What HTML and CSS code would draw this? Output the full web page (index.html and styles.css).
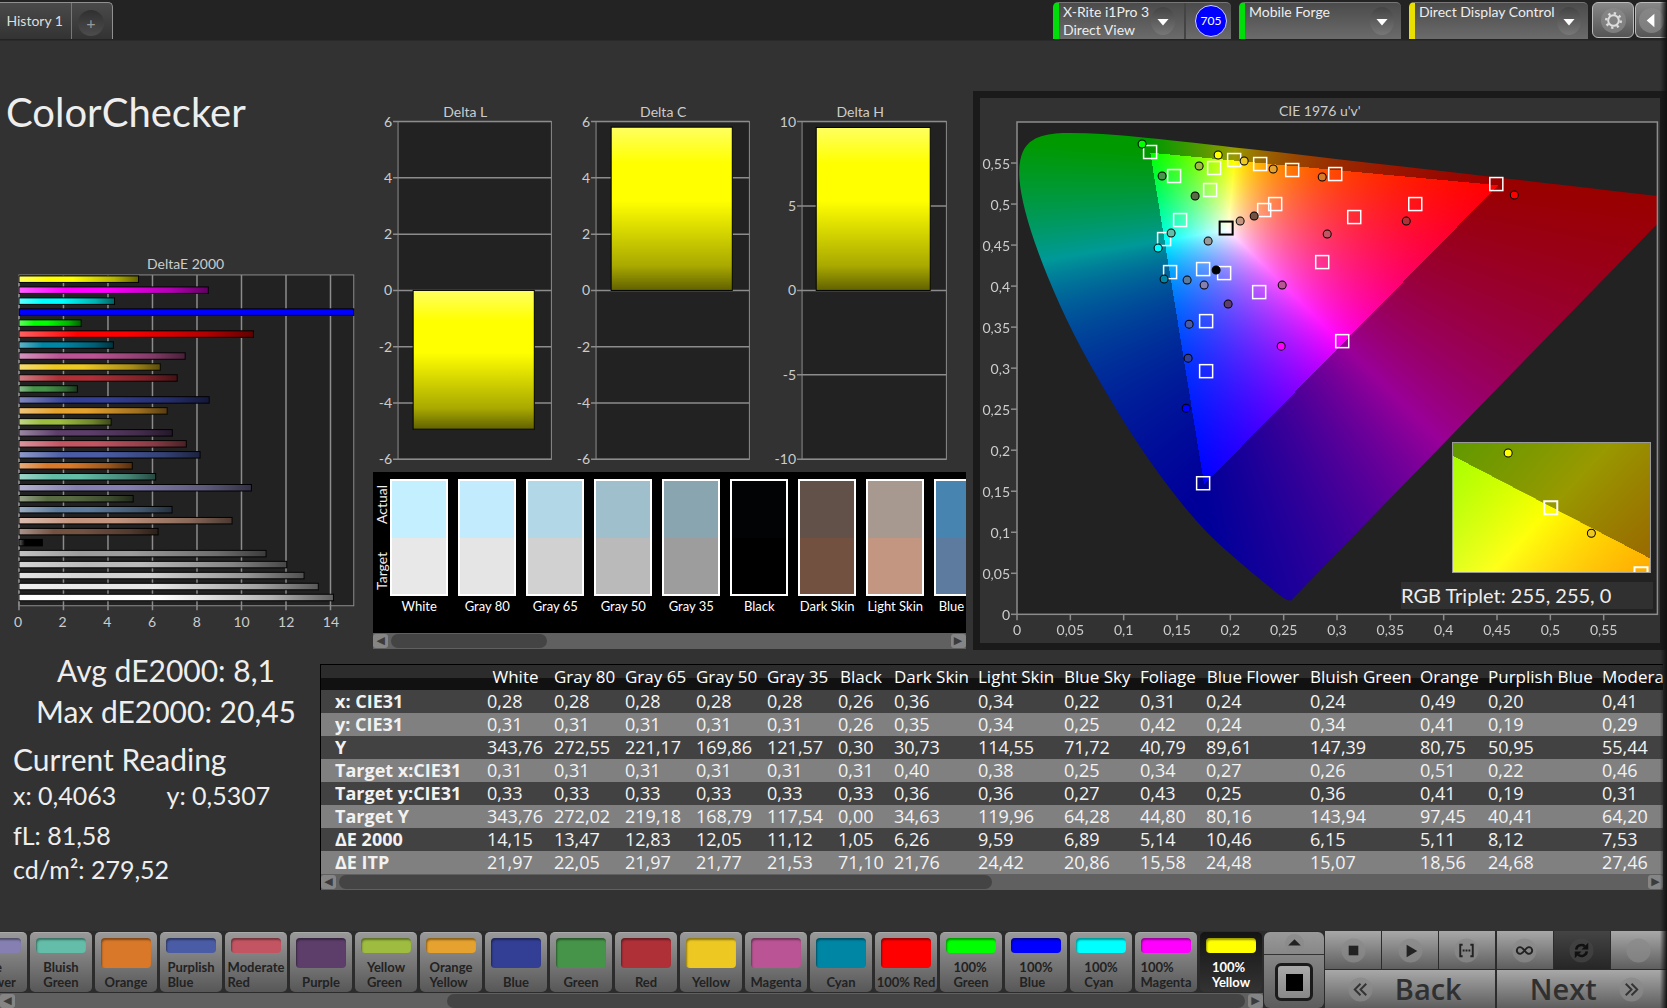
FILE: index.html
```html
<!DOCTYPE html>
<html lang="en">
<head>
<meta charset="utf-8">
<title>ColorChecker</title>
<link rel="stylesheet" href="styles.css">
</head>
<body>
<svg width="0" height="0" class="defs" aria-hidden="true">
  <defs>
    <linearGradient id="shade-x"><stop offset="0" stop-color="#fff" stop-opacity=".38"/><stop offset=".25" stop-color="#fff" stop-opacity="0"/><stop offset=".45" stop-color="#000" stop-opacity="0"/><stop offset=".8" stop-color="#000" stop-opacity=".3"/><stop offset="1" stop-color="#000" stop-opacity=".62"/></linearGradient>
    <linearGradient id="shade-y" x2="0" y2="1"><stop offset="0" stop-color="#fff" stop-opacity=".38"/><stop offset=".22" stop-color="#fff" stop-opacity="0"/><stop offset=".45" stop-color="#000" stop-opacity="0"/><stop offset=".85" stop-color="#000" stop-opacity=".34"/><stop offset="1" stop-color="#000" stop-opacity=".62"/></linearGradient>
  </defs>
</svg>
<header class="topbar">
  <nav class="tabs"><button class="tab">History 1</button><button class="tab add" aria-label="Add tab"><span class="dot">+</span></button></nav>
  <div class="devices">
    <div class="device meter"><button class="pick">X-Rite i1Pro 3<br>Direct View</button><span class="knob"><svg viewBox="0 0 26 30"><path d="M7 13h12l-6 7z"/></svg></span><span class="count">705</span></div>
    <div class="device source"><select aria-label="Source"><option>Mobile Forge</option></select><span class="knob"><svg viewBox="0 0 26 30"><path d="M7 13h12l-6 7z"/></svg></span></div>
    <div class="device display"><select aria-label="Display"><option>Direct Display Control</option></select><span class="knob"><svg viewBox="0 0 26 30"><path d="M7 13h12l-6 7z"/></svg></span></div>
    <button class="tool" aria-label="Settings"><svg viewBox="0 0 28 28"><circle cx="14" cy="14" r="13" class="well"/><g fill="none" stroke="#ddd"><circle cx="14" cy="14" r="5.5" stroke-width="2"/><circle cx="14" cy="14" r="7.5" stroke-width="2.6" stroke-dasharray="2.4 3.49"/></g></svg></button>
    <button class="tool last" aria-label="Collapse"><svg viewBox="0 0 28 28"><circle cx="14" cy="14" r="13" class="well"/><path d="M17 7v14l-8-7z" fill="#fff"/></svg></button>
  </div>
</header>

<main>
  <section class="charts">
    <div class="left">
      <h1>ColorChecker</h1>
      <svg id="delta-e" class="chart" viewBox="0 0 374 397"></svg>
    </div>
    <div class="middle">
      <div class="deltas">
        <svg class="chart delta" viewBox="0 0 197 369" data-name="Delta L" data-max="6" data-step="2" data-value="-4.93"></svg>
        <svg class="chart delta" viewBox="0 0 197 369" data-name="Delta C" data-max="6" data-step="2" data-value="5.8"></svg>
        <svg class="chart delta" viewBox="0 0 197 369" data-name="Delta H" data-max="10" data-step="5" data-value="9.65"></svg>
      </div>
      <div class="compare">
        <div class="strip"><div class="sides"><span>Target</span><span>Actual</span></div><div id="pairs" class="pairs"></div></div>
        <div class="scroll"><button aria-label="Scroll left">◀</button><div class="track"><div class="thumb" style="width:28%"></div></div><button aria-label="Scroll right">▶</button></div>
      </div>
    </div>
    <figure class="cie">
      <figcaption>CIE 1976 u'v'</figcaption>
      <div class="plot">
        <canvas id="gamut" width="640" height="492"></canvas>
        <svg id="cie-marks" class="chart" viewBox="0 0 640 492"></svg>
        <div class="inset"><canvas id="zoomed" width="196" height="129"></canvas>
          <svg viewBox="0 0 196 129"><g fill="none" stroke="#fff" stroke-width="2"><path d="M91 58h13v13H91zM181 137v-13h13v13"/></g><circle cx="55" cy="10" r="4" fill="#ff0" stroke="#000"/><circle cx="138" cy="90" r="4" fill="#eec822" stroke="#000"/></svg></div>
        <p class="triplet">RGB Triplet: 255, 255, 0</p>
      </div>
    </figure>
  </section>

  <section class="data">
    <div class="stats">
      <p class="sum">Avg dE2000: 8,1</p>
      <p class="sum">Max dE2000: 20,45</p>
      <h2>Current Reading</h2>
      <p class="xy"><span>x: 0,4063</span><span>y: 0,5307</span></p>
      <p class="lum">fL: 81,58</p>
      <p class="cd">cd/m²: 279,52</p>
    </div>
    <div class="tablebox">
      <div class="clip">
        <table><colgroup><col class="c158"><col class="c67"><col class="c71"><col class="c71"><col class="c71"><col class="c71"><col class="c56"><col class="c84"><col class="c86"><col class="c76"><col class="c66"><col class="c104"><col class="c110"><col class="c68"><col class="c114"><col class="c114"></colgroup>
          <thead></thead><tbody></tbody></table>
      </div>
      <div class="scroll"><button aria-label="Scroll left">◀</button><div class="track"><div class="thumb" style="width:50%"></div></div><button aria-label="Scroll right">▶</button></div>
    </div>
  </section>
</main>

<footer class="bottom">
  <div class="patches">
    <div id="patch-row" class="patch-row"></div>
    <div class="scroll"><button aria-label="Scroll left">◀</button><div class="track"><div class="thumb" style="width:65%;margin-left:auto"></div></div><button aria-label="Scroll right">▶</button></div>
  </div>
  <div class="stopper">
    <button class="up" aria-label="Expand"><svg viewBox="0 0 18 18"><circle cx="9" cy="9" r="9" class="well"/><path d="M3 11h12L9 5z" fill="#222"/></svg></button>
    <button class="full" aria-label="Stop"><span></span></button>
  </div>
  <div class="controls">
    <button aria-label="Stop reading"><svg viewBox="0 0 26 26"><circle cx="13" cy="13" r="12.500" class="well"/><path d="M8 8h10v10H8z" fill="#222"/></svg></button>
    <button aria-label="Play"><svg viewBox="0 0 26 26"><circle cx="13" cy="13" r="12.500" class="well"/><path d="M9 7v13l11-6.500z" fill="#222"/></svg></button>
    <button aria-label="Read series"><svg viewBox="0 0 26 26"><circle cx="13" cy="13" r="12.500" class="well"/><path d="M9 7H6.500v12H9M17 7h2.500v12H17" fill="none" stroke="#222" stroke-width="2"/><path d="M9 13h2m1 0h2m1 0h2" stroke="#222" stroke-width="2"/></svg></button>
    <button aria-label="Continuous"><svg viewBox="0 0 26 26"><circle cx="13" cy="13" r="12.500" class="well"/><path d="M13 13c-2-2.500-3-3.500-4.500-3.500a3.500 3.500 0 0 0 0 7C10 16.500 11 15.500 13 13s3-3.500 4.500-3.500a3.500 3.500 0 0 1 0 7C16 16.500 15 15.500 13 13z" fill="none" stroke="#222" stroke-width="2"/></svg></button>
    <button class="on" aria-label="Repeat"><svg viewBox="0 0 26 26"><circle cx="13" cy="13" r="12.500" class="well"/><path d="M7.500 12a5.500 5 0 0 1 9-3.500M18.500 14a5.500 5 0 0 1-9 3.500" fill="none" stroke="#111" stroke-width="2.600"/><path d="M20 5v7h-7zM6 21v-7h7z" fill="#111"/></svg></button>
    <button aria-label="Record"><svg viewBox="0 0 26 26"><circle cx="13" cy="13" r="12.500" class="well"/></svg></button>
    <button class="wide back"><svg viewBox="0 0 26 26"><circle cx="13" cy="13" r="12.500" class="well"/><path d="M13 7l-6 6 6 6M19 7l-6 6 6 6" fill="none" stroke="#333" stroke-width="2"/></svg>Back</button>
    <button class="wide next">Next<svg viewBox="0 0 26 26"><circle cx="13" cy="13" r="12.500" class="well"/><path d="M7 7l6 6-6 6M13 7l6 6-6 6" fill="none" stroke="#333" stroke-width="2"/></svg></button>
  </div>
</footer>
<script src="charts.js"></script>
</body>
</html>
```
FILE: styles.css
```css
* { box-sizing: border-box; }
html { background: #323232; }
body { margin: 0; min-height: 100vh; display: flex; flex-direction: column; overflow-x: hidden; background: #323232; color: #eee; font: 14px/16px Lato, "Noto Sans", sans-serif; }
body::after { content: ""; position: fixed; top: 0; right: 0; bottom: 0; width: 7px; background: linear-gradient(90deg, transparent, #111); pointer-events: none; }
button, select { font: inherit; color: inherit; border: 0; padding: 0; margin: 0; background: none; }
h1, h2, p, figure { margin: 0; font-weight: 400; }
.defs { position: absolute; }
svg .well { fill: #8a8a8a; fill-opacity: .75; }

.topbar { height: 41px; display: flex; justify-content: space-between; background: #232323; border-bottom: 1px solid #2a2a2a; padding-top: 2px; overflow: hidden; }
.tabs { display: flex; height: 37px; border: 1px solid #909090; border-width: 1px 1px 0 0; border-radius: 0 5px 0 0; background: linear-gradient(#4a4a4a, #333); }
.tab { width: 72px; border-right: 1px solid #777; color: #ddd; text-align: right; padding-right: 8px; }
.tab.add { width: 40px; border: 0; padding: 3px 6px 0; }
.dot { display: block; width: 26px; height: 26px; border-radius: 50%; background: linear-gradient(#303030, #4c4c4c); color: #999; font-size: 16px; line-height: 26px; text-align: center; }
.devices { display: flex; align-items: flex-start; }
.device { position: relative; height: 37px; width: 162px; margin-right: 8px; border-top: 1px solid #777; border-radius: 5px 5px 0 0; background: linear-gradient(#4b4b4b, #6b6b6b); border-left: 6px solid #00dd08; display: flex; align-items: flex-start; }
.device.meter { width: 178px; }
.device.display { width: 179px; margin-right: 4px; border-left-color: #e8e000; }
.pick { display: flex; align-items: flex-start; width: 127px; height: 36px; text-align: left; padding-left: 4px; line-height: 18px; border-right: 2px solid #444; white-space: nowrap; }
.device select { appearance: none; width: 100%; height: 17px; padding: 0 0 0 4px; line-height: 17px; }
.knob { position: absolute; right: 7px; top: 4px; width: 24px; height: 28px; border-radius: 50%; background: linear-gradient(#444, #777); pointer-events: none; }
.meter .knob { right: 56px; }
.knob svg { display: block; width: 24px; fill: #fff; }
.count { width: 32px; height: 32px; margin: 2px 0 0 9px; border: 1px solid #ccf; border-radius: 50%; background: #00f; color: #fff; font-size: 12px; line-height: 30px; text-align: center; }
.tool { width: 42px; height: 36px; margin-right: 1px; border: 1px solid #bbb; border-radius: 6px; background: linear-gradient(#888, #555); display: grid; place-items: center; }
.tool svg { width: 27px; }
.tool.last { width: 32px; margin: 0; border-right: 0; border-radius: 6px 0 0 6px; }

main { padding-top: 50px; }
.charts { display: grid; grid-template-columns: minmax(0, 373fr) minmax(0, 599fr) minmax(0, 694fr); align-items: stretch; }
.left { display: flex; flex-direction: column; justify-content: space-between; padding-bottom: 4px; }
h1 { font-size: 40px; line-height: 42px; padding-left: 6px; }
.chart { display: block; overflow: visible; fill: #ccc; font-size: 14px; }
.middle { padding: 11px 7px 0 0; }
.deltas { display: grid; grid-template-columns: 1fr 1fr 1fr; }
.compare { background: #000; }
.strip { height: 161px; display: flex; overflow: hidden; padding-top: 7px; }
.sides { writing-mode: vertical-rl; transform: rotate(180deg); width: 17px; height: 117px; display: flex; justify-content: space-between; line-height: 17px; flex: none; padding: 6px 0; }
.pairs { display: flex; gap: 10px; }
.pair { width: 58px; text-align: center; color: #fff; font-size: 13px; line-height: 20px; white-space: nowrap; flex: none; }
.pair i { display: block; height: 59px; border: 2px solid #fff; border-bottom: 0; }
.pair i + i { height: 58px; border: 2px solid #fff; border-top: 0; }
.scroll { display: flex; height: 16px; background: #606060; padding: 1px 0; }
.scroll button { width: 15px; height: 14px; border-radius: 3px; background: #858585; color: #3c3c3c; font: 11px/14px "DejaVu Sans", sans-serif; }
.track { flex: 1; padding: 0 3px; }
.thumb { height: 14px; border-radius: 7px; background: #444; }

.cie { border: 7px solid #1a1a1a; padding: 0 3px 29px 37px; }
.cie figcaption { height: 24px; line-height: 26px; text-align: center; color: #ccc; padding-right: 34px; }
.plot { position: relative; background: #222; }
.plot canvas { display: block; width: 100%; }
.plot > svg { position: absolute; inset: 0; width: 100%; }
.inset { position: absolute; right: 1%; top: 65%; width: 31%; border: 1px solid #999; overflow: hidden; }
.inset svg { position: absolute; inset: 0; width: 100%; }
.triplet { position: absolute; right: 4px; bottom: 5px; width: 252px; background: #303030; font-size: 20px; line-height: 27px; }

.data { display: flex; margin-top: 14px; }
.stats { width: 320px; flex: none; }
.sum { font-size: 30px; line-height: 41px; padding-left: 12px; text-align: center; margin-top: -14px; margin-bottom: 14px; }
h2 { font-size: 30px; line-height: 38px; padding-left: 13px; margin-top: -6px; }
.xy, .lum, .cd { font-size: 25px; line-height: 34px; padding-left: 13px; }
.xy { display: flex; }
.xy span { width: 157px; }
.lum { margin-top: 6px; }
.tablebox { flex: 1; min-width: 0; border: 1px solid #000; border-width: 1px 0 0 1px; margin-right: 4px; }
.clip { overflow: hidden; }
table { width: 1387px; table-layout: fixed; border-collapse: collapse; white-space: nowrap; font-family: "Open Sans", "Noto Sans", sans-serif; font-size: 18px; }
thead tr { background: linear-gradient(#2c2c2c 50%, #111 51%); }
thead th { height: 25px; padding: 0 2px 2px 8px; line-height: 22px; font-size: 17px; font-weight: 400; color: #fff; }
td, tbody th { height: 23px; padding: 0 0 0 8px; line-height: 23px; text-align: left; color: #f2f2f2; }
tbody th { padding-left: 14px; }
tbody tr { background: #424242; }
tbody tr:nth-child(even) { background: #808080; }
.c158 { width: 158px; } .c67 { width: 67px; } .c71 { width: 71px; } .c56 { width: 56px; } .c84 { width: 84px; } .c86 { width: 86px; } .c76 { width: 76px; } .c66 { width: 66px; } .c104 { width: 104px; } .c110 { width: 110px; } .c68 { width: 68px; } .c114 { width: 114px; }

.bottom { margin-top: auto; display: flex; height: 77px; background: #2c2c2c; }
.patches { flex: 1; min-width: 0; overflow: hidden; }
.patch-row { display: flex; justify-content: flex-end; gap: 3px; height: 62px; padding: 1px 1px 0 0; }
.patch { width: 62px; height: 60px; flex: none; display: flex; flex-direction: column; justify-content: space-between; align-items: center; padding: 5px 0 2px; border-top: 1px solid #aaa; border-radius: 5px; background: linear-gradient(#999, #575757); color: #222; font-weight: 700; font-size: 13px; line-height: 15px; text-align: left; }
.patch i { width: 50px; flex: 1; border-radius: 4px; margin-bottom: 7px; box-shadow: inset 1px 2px 2px rgba(0, 0, 0, .4); }
.patch.active { background: linear-gradient(#151515, #333); border-color: #151515; color: #fff; }
.stopper { width: 60px; margin: 1px 1px 0 1px; display: flex; flex-direction: column; border-radius: 6px; background: linear-gradient(#999, #5c5c5c); }
.up { height: 23px; border-bottom: 1px solid #333; }
.up svg { width: 19px; display: block; margin: auto; }
.full { width: 38px; height: 38px; margin: 8px auto 0; border: 3px solid #1b1b1b; border-radius: 6px; background: linear-gradient(#aaa, #888); display: grid; place-items: center; }
.full span { width: 17px; height: 17px; background: #000; }
.controls { width: 342px; display: grid; grid-template-columns: repeat(6, 1fr); grid-template-rows: 38px 38px; gap: 1px; }
.controls button { background: linear-gradient(#a8a8a8, #5e5e5e); display: flex; align-items: center; justify-content: center; }
.controls button:nth-child(3) { margin-right: 1px; }
.controls svg { width: 25px; height: 25px; }
.controls .on { background: linear-gradient(#444, #262626); }
.on .well { fill: #444; }
.controls .wide { grid-column: span 3; gap: 22px; color: #303030; font: 600 29px/36px "Open Sans", sans-serif; }
.controls .back { padding-right: 10px; margin-right: 1px; }
.controls .next { padding-left: 10px; }
```
FILE: charts.js
```js
const NS = 'http://www.w3.org/2000/svg';
function add(svg, tag, attrs, text) {
  const el = document.createElementNS(NS, tag);
  for (const k in attrs) el.setAttribute(k, attrs[k]);
  if (text !== undefined) el.textContent = text;
  svg.append(el);
}
const line = (s, x1, y1, x2, y2, w) => add(s, 'path', { d: `M${x1} ${y1}L${x2} ${y2}`, stroke: '#8c8c8c', 'stroke-width': w || 1.5 });
const label = (s, x, y, t, anchor) => add(s, 'text', { x, y, 'text-anchor': anchor || 'middle' }, t);
function bar(s, x, y, width, height, fill, shade) {
  add(s, 'rect', { x, y, width, height, fill });
  add(s, 'rect', { x, y, width, height, fill: `url(#${shade})`, stroke: '#000' });
}

// Delta E 2000 per patch, top to bottom
const errors = [[5.38, '#ff0'], [8.52, '#f0f'], [4.3, '#0ff'], [15.07, '#00f'], [2.8, '#0f0'], [10.55, '#f00'], [4.25, '#0086a5'], [7.48, '#bb5494'], [6.36, '#eec822'], [7.12, '#b03038'], [2.63, '#469449'], [8.56, '#333f94'], [6.67, '#e6a22e'], [4.15, '#9dbc40'], [6.9, '#5d3e6b'], [7.53, '#c35563'], [8.15, '#4a5ca5'], [5.1, '#d97828'], [6.15, '#63bda8'], [10.46, '#8580b1'], [5.14, '#586b42'], [6.89, '#5d7b9c'], [9.59, '#c49680'], [6.26, '#735242'], [1.05, '#000'], [11.12, '#9c9c9c'], [12.05, '#bbb'], [12.83, '#d2d2d2'], [13.47, '#e8e8e8'], [14.15, '#fff']];
const de = document.getElementById('delta-e');
add(de, 'rect', { x: 19, y: 25, width: 335.5, height: 331.5, fill: '#222', stroke: '#8c8c8c' });
for (let v = 0; v < 15; v += 2) {
  line(de, 19 + v * 22.3, 25, 19 + v * 22.3, 361);
  label(de, 18 + v * 22.4, 378, v);
}
errors.forEach(([v, c], i) => bar(de, 19, 26 + i * 11, v * 22.27, 6.5, c, v > 15 ? '' : 'shade-x'));
label(de, 186, 19, 'DeltaE 2000');

for (const s of document.querySelectorAll('.delta')) {
  const { name, max, step, value } = s.dataset;
  const left = max > 6 ? 34 : 25, h = 337, top = 19.5, zero = top + h / 2, k = h / 2 / max;
  add(s, 'rect', { x: left, y: top, width: 178 - left, height: h, fill: '#222', stroke: '#8c8c8c' });
  for (let v = -max; v <= +max; v += +step) {
    line(s, left - 5, zero - v * k, 178, zero - v * k);
    label(s, left - 6, zero - v * k + 5, v, 'end');
  }
  const w = (178 - left) * 0.79;
  bar(s, left + (176 - left - w) / 2, zero - Math.max(value, 0) * k, w, Math.abs(value) * k, '#ff0', 'shade-y');
  label(s, 92, 15, name);
}

// Measured against target swatches
[['White', '#c4efff', '#e8e8e8'], ['Gray 80', '#c2ebfe', '#e5e5e5'], ['Gray 65', '#b2d7e6', '#d1d1d1'], ['Gray 50', '#9fbfcd', '#bababa'], ['Gray 35', '#89a5b0', '#9d9d9d'], ['Black', '#020304', '#000'], ['Dark Skin', '#625148', '#735140'], ['Light Skin', '#a89990', '#c39681'], ['Blue Sky', '#4785b0', '#5d7b9e']].forEach(([n, a, t]) => {
  document.getElementById('pairs').insertAdjacentHTML('beforeend', `<div class="pair"><i style="background:${a}"></i><i style="background:${t}"></i>${n}</div>`);
});

const heads = ['', 'White', 'Gray 80', 'Gray 65', 'Gray 50', 'Gray 35', 'Black', 'Dark Skin', 'Light Skin', 'Blue Sky', 'Foliage', 'Blue Flower', 'Bluish Green', 'Orange', 'Purplish Blue', 'Moderate Red'];
const rows = `x: CIE31|0,28|0,28|0,28|0,28|0,28|0,26|0,36|0,34|0,22|0,31|0,24|0,24|0,49|0,20|0,41
y: CIE31|0,31|0,31|0,31|0,31|0,31|0,26|0,35|0,34|0,25|0,42|0,24|0,34|0,41|0,19|0,29
Y|343,76|272,55|221,17|169,86|121,57|0,30|30,73|114,55|71,72|40,79|89,61|147,39|80,75|50,95|55,44
Target x:CIE31|0,31|0,31|0,31|0,31|0,31|0,31|0,40|0,38|0,25|0,34|0,27|0,26|0,51|0,22|0,46
Target y:CIE31|0,33|0,33|0,33|0,33|0,33|0,33|0,36|0,36|0,27|0,43|0,25|0,36|0,41|0,19|0,31
Target Y|343,76|272,02|219,18|168,79|117,54|0,00|34,63|119,96|64,28|44,80|80,16|143,94|97,45|40,41|64,20
ΔE 2000|14,15|13,47|12,83|12,05|11,12|1,05|6,26|9,59|6,89|5,14|10,46|6,15|5,11|8,12|7,53
ΔE ITP|21,97|22,05|21,97|21,77|21,53|71,10|21,76|24,42|20,86|15,58|24,48|15,07|18,56|24,68|27,46`.split('\n');
document.querySelector('thead').innerHTML = '<tr>' + heads.map(h => `<th scope="col">${h}</th>`).join('') + '</tr>';
document.querySelector('tbody').innerHTML = rows.map(r => {
  const [h, ...cells] = r.split('|');
  return `<tr><th scope="row">${h}</th>${cells.map(c => `<td>${c}</td>`).join('')}</tr>`;
}).join('');

[['Blue<br>Flower', '#8580b1'], ['Bluish<br>Green', '#63bda8'], ['Orange', '#d97828'], ['Purplish<br>Blue', '#4a5ca5'], ['Moderate<br>Red', '#c35563'], ['Purple', '#5d3e6b'], ['Yellow<br>Green', '#9dbc40'], ['Orange<br>Yellow', '#e6a22e'], ['Blue', '#333f94'], ['Green', '#469449'], ['Red', '#b03038'], ['Yellow', '#eec822'], ['Magenta', '#bb5494'], ['Cyan', '#0086a5'], ['100% Red', '#f00'], ['100%<br>Green', '#0f0'], ['100%<br>Blue', '#00f'], ['100%<br>Cyan', '#0ff'], ['100%<br>Magenta', '#f0f'], ['100%<br>Yellow', '#ff0']].forEach(([n, c], i) => {
  document.getElementById('patch-row').insertAdjacentHTML('beforeend', `<button class="patch${i === 19 ? ' active' : ''}"><i style="background:${c}"></i><span>${n}</span></button>`);
});

// Chromaticity fill: full brightness inside the display gamut, dimmed outside
function shade(x, y) {
  const X = x / y, Z = (1 - x - y) / y;
  const rgb = [3.2406 * X - 1.5372 - 0.4986 * Z, -0.9689 * X + 1.8758 + 0.0415 * Z, 0.0557 * X - 0.204 + 1.057 * Z];
  const m = Math.max(...rgb), k = Math.min(...rgb) < -0.0005 ? 153 : 255;
  return rgb.map(c => k * Math.max(c, 0) / m);
}
function paint(canvas, toXY) {
  const ctx = canvas.getContext('2d'), { width: w, height: h } = canvas, img = ctx.createImageData(w, h);
  for (let j = 0; j < h; j++) for (let i = 0; i < w; i++) {
    const [x, y] = toXY((i + 0.5) / w, 1 - (j + 0.5) / h);
    img.data.set([...shade(x, y), 255], (j * w + i) * 4);
  }
  ctx.putImageData(img, 0, 0);
  return ctx;
}
paint(document.getElementById('zoomed'), (a, b) => [0.4193 + (a - 0.5) * 0.06, 0.5053 + (b - 0.5) * 0.06]);
const gamut = document.getElementById('gamut');
const g = paint(gamut, (a, b) => {
  const u = a * 0.6, v = b * 0.6, d = 6 * u - 16 * v + 12;
  return [9 * u / d, 4 * v / d];
});
const locus = [.1741, .005, .1726, .0048, .1689, .0069, .1644, .0109, .1566, .0177, .144, .0297, .1355, .0399, .1241, .0578, .1096, .0868, .0913, .1327, .0687, .2007, .0454, .295, .0235, .4127, .0082, .5384, .0039, .6548, .0139, .7502, .0389, .812, .0743, .8338, .1142, .8262, .1547, .8059, .2296, .7543, .3016, .6923, .3731, .6245, .4441, .5547, .5125, .4866, .5752, .4242, .627, .3725, .6658, .334, .6915, .3083, .719, .2809, .7347, .2653];
const pts = [];
for (let i = 0; i < locus.length; i += 2) {
  const x = locus[i], y = locus[i + 1], d = -2 * x + 12 * y + 3;
  pts.push([4 * x / d / 0.6 * 640, 492 - 9 * y / d / 0.6 * 492]);
}
g.globalCompositeOperation = 'destination-in';
g.beginPath();
g.moveTo(...pts[0]);
for (let i = 1; i < pts.length - 1; i++) g.quadraticCurveTo(...pts[i], (pts[i][0] + pts[i + 1][0]) / 2, (pts[i][1] + pts[i + 1][1]) / 2);
g.lineTo(...pts[pts.length - 1]);
g.fill();

const cie = document.getElementById('cie-marks');
add(cie, 'rect', { x: 0, y: 0, width: 640, height: 492, fill: 'none', stroke: '#8c8c8c', 'stroke-width': 1.5 });
for (let i = 0; i < 12; i++) {
  const t = String(+(i * 0.05).toFixed(2)).replace('.', ',');
  line(cie, i * 53.3, 492, i * 53.3, 498);
  label(cie, i * 53.3, 513, t);
  line(cie, -6, 492 - i * 41, 0, 492 - i * 41);
  label(cie, -7, 498 - i * 41, t, 'end');
}
[[133, 30], [157, 54], [197, 46], [217, 38], [243, 42], [275, 48], [318, 52], [479, 62], [398, 82], [337, 95], [193, 68], [258, 82], [247, 88], [209, 106, '#000'], [163, 98], [147, 117], [153, 150], [186, 147], [207, 151], [305, 140], [242, 170], [189, 199], [325, 219], [189, 249], [186, 361]].forEach(([x, y, c]) => add(cie, 'rect', { x: x - 6.5, y: y - 6.5, width: 13, height: 13, fill: 'none', stroke: c || '#fff', 'stroke-width': c ? 2 : 1.5 }));
[[125, 22, '#0f0'], [145, 54, '#469449'], [182, 44, '#9dbc40'], [201, 33, '#ff0'], [227, 39, '#eec822'], [256, 47, '#e6a22e'], [305, 55, '#d97828'], [497, 73, '#f00'], [178, 74, '#586b42'], [389, 99, '#b03038'], [310, 112, '#c35563'], [223, 99, '#c49680'], [237, 94, '#735242'], [191, 119, '#999'], [154, 111, '#63bda8'], [141, 126, '#0ff'], [147, 157, '#0086a5'], [170, 158, '#5d7b9c'], [187, 163, '#8580b1'], [199, 148, '#000'], [265, 163, '#bb5494'], [211, 182, '#5d3e6b'], [172, 202, '#4a5ca5'], [264, 224, '#f0f'], [171, 236, '#333f94'], [169, 286, '#00f']].forEach(([cx, cy, fill]) => add(cie, 'circle', { cx, cy, r: 4, fill, stroke: '#000' }));
```
